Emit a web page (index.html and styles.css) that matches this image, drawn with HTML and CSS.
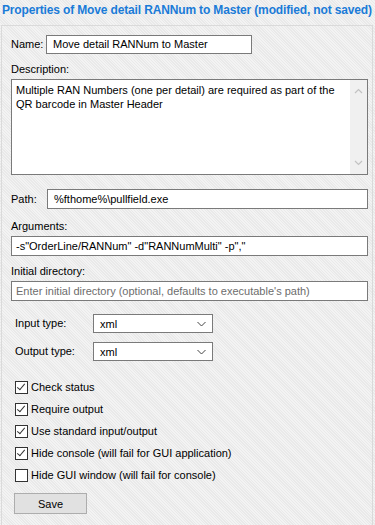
FILE: index.html
```html
<!DOCTYPE html>
<html lang="en">
  <head>
    <meta charset="UTF-8" />
    <title>Properties</title>
    <link rel="stylesheet" href="styles.css">
  </head>
  <body>
    <div class="title">Properties of Move detail RANNum to Master (modified, not saved)</div>

    <div class="panel">
      <div class="row">
        <span class="label name-label">Name:</span>
        <div class="field name-field">Move detail RANNum to Master</div>
      </div>

      <div class="label block desc-label">Description:</div>
      <div class="memo">
        <div class="memo-text">Multiple RAN Numbers (one per detail) are required as part of the QR barcode in Master Header</div>
        <div class="scrollbar">
          <svg width="9" height="6" viewBox="0 0 9 6"><path d="M1 5 L4.5 1.5 L8 5" fill="none" stroke="#c2c2c2" stroke-width="1.2" /></svg>
          <svg width="9" height="6" viewBox="0 0 9 6"><path d="M1 1 L4.5 4.5 L8 1" fill="none" stroke="#c2c2c2" stroke-width="1.2" /></svg>
        </div>
      </div>

      <div class="row path-row">
        <span class="label path-label">Path:</span>
        <div class="field path-field">%fthome%\pullfield.exe</div>
      </div>

      <div class="label block">Arguments:</div>
      <div class="field wide">-s"OrderLine/RANNum" -d"RANNumMulti" -p","</div>

      <div class="label block dir-label">Initial directory:</div>
      <div class="field wide placeholder">Enter initial directory (optional, defaults to executable's path)</div>

      <div class="row type-row first-type">
        <span class="label type-label">Input type:</span>
        <div class="select">
          <span>xml</span>
          <svg width="9" height="6" viewBox="0 0 9 6"><path d="M0.5 1 L4.5 5 L8.5 1" fill="none" stroke="#444" stroke-width="1" /></svg>
        </div>
      </div>
      <div class="row type-row">
        <span class="label type-label">Output type:</span>
        <div class="select">
          <span>xml</span>
          <svg width="9" height="6" viewBox="0 0 9 6"><path d="M0.5 1 L4.5 5 L8.5 1" fill="none" stroke="#444" stroke-width="1" /></svg>
        </div>
      </div>

      <div class="checks">
        <div class="check"><span class="box checked"></span>Check status</div>
        <div class="check"><span class="box checked"></span>Require output</div>
        <div class="check"><span class="box checked"></span>Use standard input/output</div>
        <div class="check"><span class="box checked"></span>Hide console (will fail for GUI application)</div>
        <div class="check"><span class="box"></span>Hide GUI window (will fail for console)</div>
      </div>

      <button class="save">Save</button>
    </div>
  </body>
</html>
```

FILE: styles.css
```css
body {
  margin: 0;
  padding: 0;
  width: 375px;
  height: 525px;
  overflow: hidden;
  font-family: "Liberation Sans", Arial, sans-serif;
  font-size: 11px;
  color: #000;
  background-color: #efefef;
  background-image: repeating-linear-gradient(45deg, #f3f3f3 0 1px, #e9e9e9 1px 2px);
}

.title {
  height: 25px;
  padding: 3px 0 0 2px;
  box-sizing: border-box;
  font-size: 12px;
  font-weight: bold;
  letter-spacing: -0.15px;
  color: #1a7bd8;
  white-space: nowrap;
}

.panel {
  margin-left: 1px;
  width: 372px;
  height: 500px;
  box-sizing: border-box;
  border: 1px solid #dadada;
  border-bottom: none;
  padding: 9px 0 0 9px;
}

.row {
  display: flex;
  align-items: center;
}

.label {
  line-height: 15px;
}

.label.block {
  margin-top: 10px;
  margin-bottom: 2px;
}

.label.desc-label {
  margin-top: 8px;
}

.label.dir-label {
  margin-top: 8px;
}

.name-label {
  width: 35px;
}

.field {
  height: 19px;
  box-sizing: border-box;
  border: 1px solid #7a7a7a;
  background: #fff;
  padding: 0 0 0 6px;
  line-height: 17px;
  white-space: nowrap;
  overflow: hidden;
}

.name-field {
  width: 206px;
}

.path-row {
  margin-top: 14px;
}

.path-label {
  width: 36px;
}

.path-field {
  width: 321px;
  height: 20px;
  line-height: 18px;
}

.wide {
  width: 357px;
  height: 20px;
  line-height: 18px;
  padding-left: 4px;
}

.placeholder {
  color: #6d6d6d;
}

.memo {
  display: flex;
  width: 357px;
  height: 96px;
  box-sizing: border-box;
  border: 1px solid #7a7a7a;
  background: #fff;
}

.memo-text {
  flex: 1;
  padding: 3px 0 0 4px;
  line-height: 14px;
}

.scrollbar {
  width: 17px;
  background: #f0f0f0;
  display: flex;
  flex-direction: column;
  justify-content: space-between;
  align-items: center;
  padding: 8px 0 8px;
}

.type-row {
  margin-top: 9px;
  padding-left: 4px;
}

.first-type {
  margin-top: 13px;
}

.type-label {
  width: 78px;
}

.select {
  width: 120px;
  height: 19px;
  box-sizing: border-box;
  border: 1px solid #7a7a7a;
  background: #fff;
  display: flex;
  align-items: center;
  justify-content: space-between;
  padding: 0 6px 0 6px;
}

.checks {
  margin-top: 20px;
  padding-left: 4px;
  display: flex;
  flex-direction: column;
  gap: 9px;
}

.check {
  display: flex;
  align-items: center;
  height: 13px;
  line-height: 13px;
}

.box {
  width: 13px;
  height: 13px;
  box-sizing: border-box;
  border: 1px solid #333;
  background: #fff;
  margin-right: 3px;
  position: relative;
}

.box.checked::after {
  content: "";
  position: absolute;
  left: 3px;
  top: 0px;
  width: 3px;
  height: 7px;
  border-right: 1.5px solid #333;
  border-bottom: 1.5px solid #333;
  transform: rotate(40deg);
}

.save {
  margin-top: 11px;
  margin-left: 3px;
  width: 73px;
  height: 21px;
  border: 1px solid #adadad;
  background: #e1e1e1;
  font-family: inherit;
  font-size: 11px;
  color: #000;
  padding: 0;
}
```
